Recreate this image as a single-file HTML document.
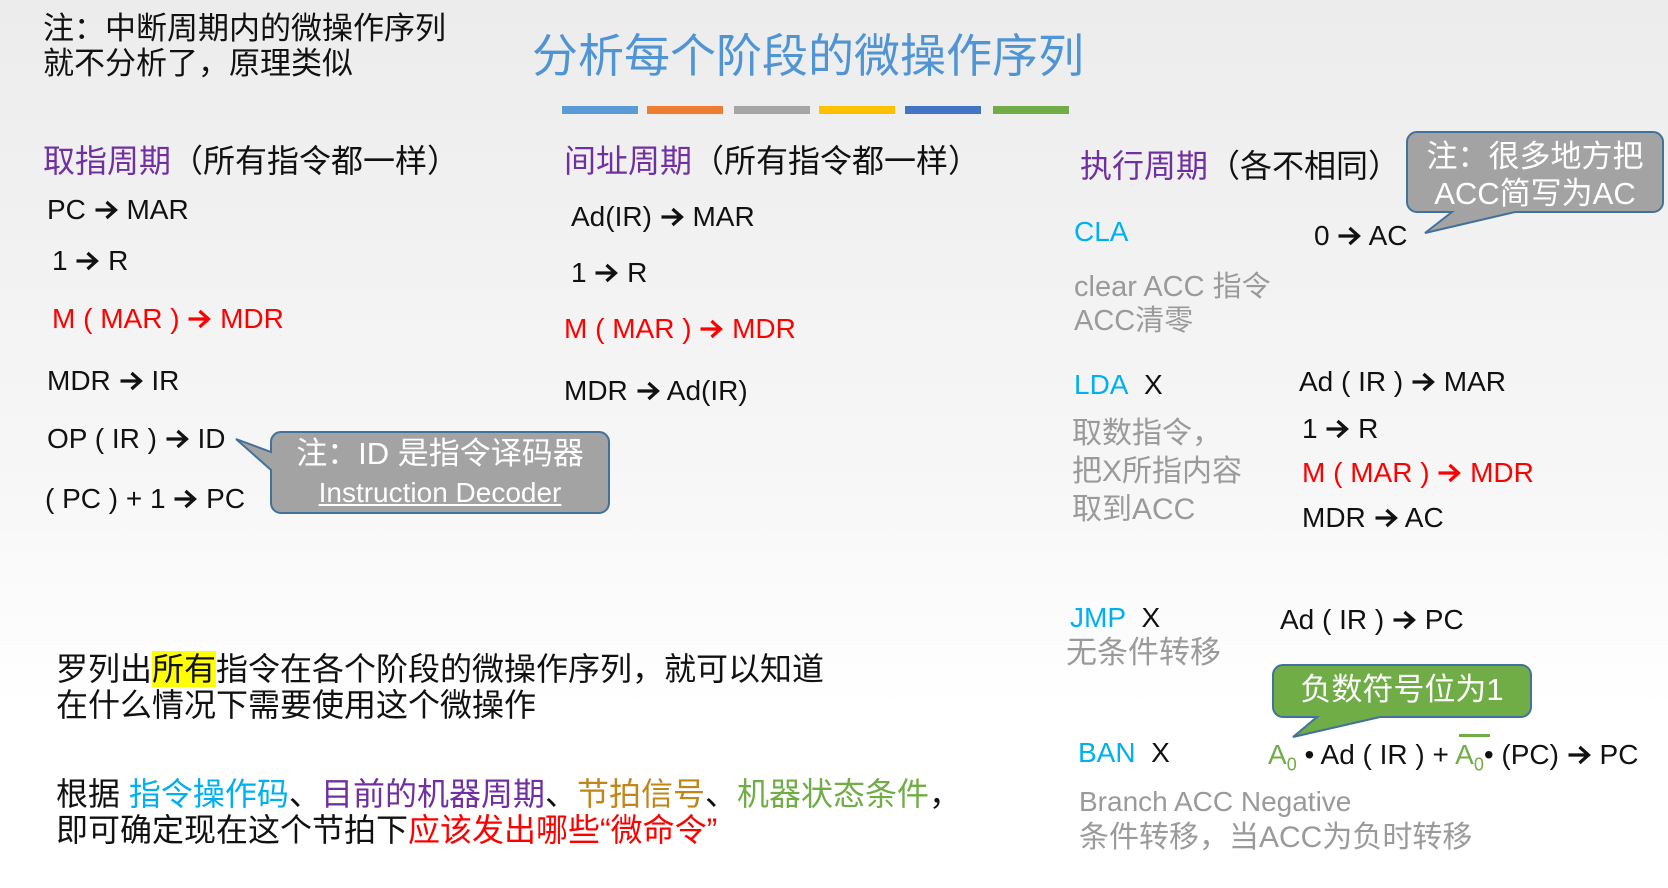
<!DOCTYPE html>
<html><head><meta charset="utf-8"><style>
html,body{margin:0;padding:0}
body{width:1668px;height:888px;position:relative;overflow:hidden;background:linear-gradient(#ececec 0%,#f7f7f7 55%,#fff 80%);font-family:"Liberation Sans","Noto Sans CJK SC",sans-serif;color:#111}
.t{position:absolute;white-space:nowrap;font-size:28px;line-height:34px}
.c{font-size:31px}
.r{color:#f00}
.p{color:#7030a0}
.b{color:#00b0f0}
.g{color:#9a9a9a;font-size:29px}
.ar{display:inline-block;width:25px;height:20px;vertical-align:-1px}
.bar{position:absolute;top:106px;height:8px;width:76px}
</style></head><body>
<svg width="0" height="0" style="position:absolute"><defs><symbol id="a" viewBox="0 0 24 20"><path d="M1,10 H21 M12,2 L21,10 L12,18" fill="none" stroke="currentColor" stroke-width="3.2"/></symbol></defs></svg>
<div class="t c" style="left:43px;top:11px;line-height:35px;font-size:31px">注：中断周期内的微操作序列<br>就不分析了，原理类似</div>
<div class="t" style="left:532px;top:28px;font-size:46px;line-height:56px;color:#4f94d4">分析每个阶段的微操作序列</div>
<div class="bar" style="left:562px;background:#5b9bd5"></div>
<div class="bar" style="left:647px;background:#ed7d31"></div>
<div class="bar" style="left:734px;background:#a5a5a5"></div>
<div class="bar" style="left:819px;background:#ffc000"></div>
<div class="bar" style="left:905px;background:#4472c4"></div>
<div class="bar" style="left:993px;background:#70ad47"></div>

<div class="t c" style="left:43px;top:142px;font-size:32px;line-height:38px"><span class="p">取指周期</span>（所有指令都一样）</div>
<div class="t" style="left:47px;top:193px">PC <svg class="ar"><use href="#a"/></svg> MAR</div>
<div class="t" style="left:52px;top:244px">1 <svg class="ar"><use href="#a"/></svg> R</div>
<div class="t r" style="left:52px;top:302px">M ( MAR ) <svg class="ar"><use href="#a"/></svg> MDR</div>
<div class="t" style="left:47px;top:364px">MDR <svg class="ar"><use href="#a"/></svg> IR</div>
<div class="t" style="left:47px;top:422px">OP ( IR ) <svg class="ar"><use href="#a"/></svg> ID</div>
<div class="t" style="left:45px;top:482px">( PC ) + 1 <svg class="ar"><use href="#a"/></svg> PC</div>

<svg style="position:absolute;left:0;top:0" width="1668" height="888">
<path d="M281,432 H599 a10,10 0 0 1 10,10 V503 a10,10 0 0 1 -10,10 H281 a10,10 0 0 1 -10,-10 V470 L236,439 L271,452 V442 a10,10 0 0 1 10,-10Z" fill="#a3a3a3" stroke="#41719c" stroke-width="2"/>
<path d="M1417,132 H1653 a10,10 0 0 1 10,10 V202 a10,10 0 0 1 -10,10 H1515 L1425,233 L1452,212 H1417 a10,10 0 0 1 -10,-10 V142 a10,10 0 0 1 10,-10Z" fill="#a3a3a3" stroke="#41719c" stroke-width="2"/>
<path d="M1283,665 H1521 a10,10 0 0 1 10,10 V707 a10,10 0 0 1 -10,10 H1380 L1293,737 L1317,717 H1283 a10,10 0 0 1 -10,-10 V675 a10,10 0 0 1 10,-10Z" fill="#70ad47" stroke="#41719c" stroke-width="2"/>
<rect x="1459" y="734" width="31" height="3" fill="#70ad47"/>
</svg>
<div class="t c" style="left:271px;top:437px;width:338px;text-align:center;color:#fff">注：ID 是指令译码器</div>
<div class="t" style="left:271px;top:476px;width:338px;text-align:center;color:#fff;text-decoration:underline;font-size:28px">Instruction Decoder</div>
<div class="t c" style="left:1407px;top:138px;width:256px;text-align:center;color:#fff;line-height:37px">注：很多地方把<br>ACC简写为AC</div>
<div class="t c" style="left:1273px;top:673px;width:258px;text-align:center;color:#fff;font-size:31px">负数符号位为1</div>

<div class="t c" style="left:564px;top:142px;font-size:32px;line-height:38px"><span class="p">间址周期</span>（所有指令都一样）</div>
<div class="t" style="left:571px;top:200px">Ad(IR) <svg class="ar"><use href="#a"/></svg> MAR</div>
<div class="t" style="left:571px;top:256px">1 <svg class="ar"><use href="#a"/></svg> R</div>
<div class="t r" style="left:564px;top:312px">M ( MAR ) <svg class="ar"><use href="#a"/></svg> MDR</div>
<div class="t" style="left:564px;top:374px">MDR <svg class="ar"><use href="#a"/></svg> Ad(IR)</div>

<div class="t c" style="left:1080px;top:147px;font-size:32px;line-height:38px"><span class="p">执行周期</span>（各不相同）</div>
<div class="t b" style="left:1074px;top:215px">CLA</div>
<div class="t" style="left:1314px;top:219px">0 <svg class="ar"><use href="#a"/></svg> AC</div>
<div class="t g" style="left:1074px;top:270px">clear ACC 指令</div>
<div class="t g" style="left:1074px;top:304px">ACC清零</div>
<div class="t" style="left:1074px;top:368px"><span class="b">LDA</span>&nbsp; X</div>
<div class="t" style="left:1299px;top:365px">Ad ( IR ) <svg class="ar"><use href="#a"/></svg> MAR</div>
<div class="t" style="left:1302px;top:412px">1 <svg class="ar"><use href="#a"/></svg> R</div>
<div class="t r" style="left:1302px;top:456px">M ( MAR ) <svg class="ar"><use href="#a"/></svg> MDR</div>
<div class="t" style="left:1302px;top:501px">MDR <svg class="ar"><use href="#a"/></svg> AC</div>
<div class="t g" style="left:1072px;top:415px;line-height:38px;font-size:30px">取数指令，<br>把X所指内容<br>取到ACC</div>
<div class="t" style="left:1070px;top:601px"><span class="b">JMP</span>&nbsp; X</div>
<div class="t g" style="left:1066px;top:636px;font-size:31px">无条件转移</div>
<div class="t" style="left:1280px;top:603px">Ad ( IR ) <svg class="ar"><use href="#a"/></svg> PC</div>
<div class="t" style="left:1078px;top:736px"><span class="b">BAN</span>&nbsp; X</div>
<div class="t" style="left:1268px;top:738px"><span style="color:#70ad47">A<sub style="font-size:18px">0</sub></span> • Ad ( IR ) + <span style="color:#70ad47">A<sub style="font-size:18px">0</sub></span>• (PC) <svg class="ar"><use href="#a"/></svg> PC</div>
<div class="t g" style="left:1079px;top:785px;font-size:28px">Branch ACC Negative</div>
<div class="t g" style="left:1079px;top:821px;font-size:30px">条件转移，当ACC为负时转移</div>

<div class="t c" style="left:56px;top:651px;line-height:36px;font-size:32px">罗列出<span style="background:#ffff00">所有</span>指令在各个阶段的微操作序列，就可以知道<br>在什么情况下需要使用这个微操作</div>
<div class="t c" style="left:56px;top:776px;line-height:36px;font-size:32px">根据 <span class="b">指令操作码</span>、<span class="p">目前的机器周期</span>、<span style="color:#c0861a">节拍信号</span>、<span style="color:#70ad47">机器状态条件</span>，<br>即可确定现在这个节拍下<span class="r">应该发出哪些“微命令”</span></div>
</body></html>
